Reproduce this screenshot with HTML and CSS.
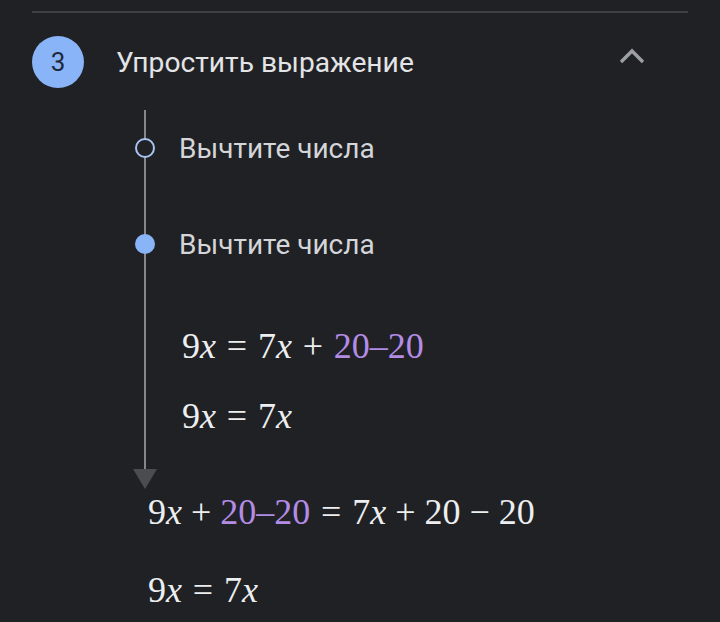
FILE: index.html
```html
<!DOCTYPE html>
<html lang="ru">
<head>
<meta charset="utf-8">
<link rel="stylesheet" href="styles.css">
</head>
<body>
<div class="page">
  <div class="divider"></div>
  <div class="header">
    <div class="num">3</div>
    <div class="title">Упростить выражение</div>
    <svg class="chev" width="28" height="18" viewBox="0 0 28 18"><path d="M3 15 L14 4 L25 15" fill="none" stroke="#9aa0a6" stroke-width="3.4"/></svg>
  </div>
  <div class="timeline">
    <div class="step"><span class="dot hollow"></span><span class="label">Вычтите числа</span></div>
    <div class="step second"><span class="dot filled"></span><span class="label">Вычтите числа</span></div>
    <div class="math inner first">9<i>x</i><span class="rel">=</span>7<i>x</i><span class="bin">+</span><span class="hl">20–20</span></div>
    <div class="math inner second-m">9<i>x</i><span class="rel">=</span>7<i>x</i></div>
  </div>
  <div class="arrow"></div>
  <div class="math outer first-o">9<i>x</i><span class="bin">+</span><span class="hl">20–20</span><span class="rel">=</span>7<i>x</i><span class="bin">+</span>20<span class="bin">−</span>20</div>
  <div class="math outer second-o">9<i>x</i><span class="rel">=</span>7<i>x</i></div>
</div>
</body>
</html>
```
FILE: styles.css
```css
html, body {
  margin: 0;
  padding: 0;
  background: #202124;
  height: 100%;
  overflow: hidden;
}
.page {
  width: 720px;
  padding-top: 11px;
  font-family: Roboto, "Noto Sans", sans-serif;
}
.divider {
  margin: 0 32px;
  height: 2px;
  background: #3c4043;
}
.header {
  display: flex;
  align-items: center;
  margin-top: 23px;
  padding-left: 32px;
  height: 52px;
}
.num {
  width: 52px;
  height: 52px;
  border-radius: 50%;
  background: #8ab4f8;
  color: #1f2a3d;
  font-size: 26px;
  display: flex;
  align-items: center;
  justify-content: center;
}
.title {
  margin-left: 32px;
  font-size: 28.2px;
  color: #e3e4e6;
  flex: 1;
}
.chev {
  margin-right: 74px;
  margin-top: -12px;
}
.timeline {
  margin-top: 22px;
  margin-left: 144px;
  border-left: 2px solid #858789;
  height: 359px;
  box-sizing: border-box;
  padding-top: 24px;
}
.step {
  display: flex;
  align-items: center;
  margin-left: -11px;
  height: 28px;
}
.step.second { margin-top: 68px; }
.dot {
  width: 20px;
  height: 20px;
  border-radius: 50%;
  box-sizing: border-box;
  flex: none;
}
.dot.hollow {
  border: 2px solid #a8c4f2;
  background: #202124;
}
.dot.filled {
  background: #8ab4f8;
}
.label {
  margin-left: 24px;
  font-size: 28px;
  color: #d4d6d9;
}
.math {
  font-family: "Liberation Serif", "Times New Roman", serif;
  font-size: 36px;
  color: #eceef0;
  line-height: 40px;
  white-space: nowrap;
}
.math i { font-style: italic; }
.rel { margin: 0 0.3em; }
.bin { margin: 0 0.25em; }
.inner.first .bin { margin: 0 0.3em; }
.hl { color: #b48ce6; }
.inner { margin-left: 36px; }
.inner.first { margin-top: 68px; }
.inner.second-m { margin-top: 30px; }
.arrow {
  margin-left: 133px;
  width: 0;
  height: 0;
  border-left: 12px solid transparent;
  border-right: 12px solid transparent;
  border-top: 20px solid #4a4c50;
}
.outer { margin-left: 148px; }
.outer.first-o { margin-top: 3px; }
.outer.second-o { margin-top: 38px; }
```
